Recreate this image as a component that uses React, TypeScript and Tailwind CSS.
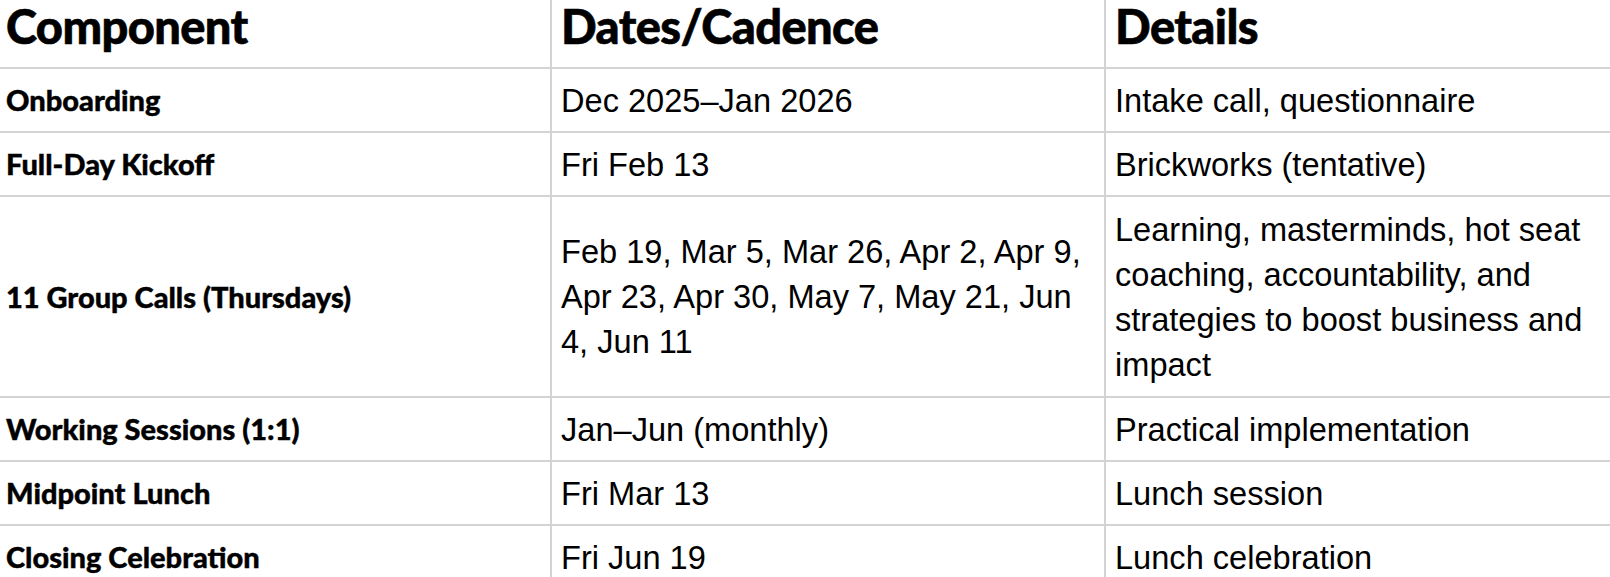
const rows: { name: string; dates: string; details: string; tall?: boolean }[] = [
  { name: 'Onboarding', dates: 'Dec 2025–Jan 2026', details: 'Intake call, questionnaire' },
  { name: 'Full-Day Kickoff', dates: 'Fri Feb 13', details: 'Brickworks (tentative)' },
  {
    name: '11 Group Calls (Thursdays)',
    dates: 'Feb 19, Mar 5, Mar 26, Apr 2, Apr 9, Apr 23, Apr 30, May 7, May 21, Jun 4, Jun 11',
    details: 'Learning, masterminds, hot seat coaching, accountability, and strategies to boost business and impact',
    tall: true,
  },
  { name: 'Working Sessions (1:1)', dates: 'Jan–Jun (monthly)', details: 'Practical implementation' },
  { name: 'Midpoint Lunch', dates: 'Fri Mar 13', details: 'Lunch session' },
  { name: 'Closing Celebration', dates: 'Fri Jun 19', details: 'Lunch celebration' },
];

// headings are a heavy geometric sans in the original; Lato bold plus a thin stroke is the nearest
const heading = "font-['Lato',sans-serif] font-black text-[47px] leading-[50px] tracking-[-0.6px] [-webkit-text-stroke:0.6px_#000]";
const label = "font-['Lato',sans-serif] font-black text-[29px] [-webkit-text-stroke:0.4px_#000]";
const body = "font-['Liberation_Sans',Arial,sans-serif] text-[32.6px] leading-[45px]";

export default function App() {
  return (
    <div className="min-h-screen w-full overflow-hidden bg-white text-black">
      <div className="-ml-[3px] w-[1663px]">
        <div className="grid h-[69px] grid-cols-[555px_554px_554px]">
          {['Component', 'Dates/Cadence', 'Details'].map((h) => (
            <div key={h} className="flex items-start border-r-2 border-b-2 border-[#d3d3d3] pl-[9px] pt-[1px]">
              <span className={heading}>{h}</span>
            </div>
          ))}
        </div>

        {rows.map((r) => (
          <div key={r.name} className={`grid grid-cols-[555px_554px_554px] ${r.tall ? 'h-[201px]' : 'h-[64px]'}`}>
            <div className="flex items-center border-r-2 border-b-2 border-[#d3d3d3] pl-[9px] pr-[10px]">
              <span className={label}>{r.name}</span>
            </div>
            <div className="flex items-center border-r-2 border-b-2 border-[#d3d3d3] pl-[9px] pr-[8px]">
              <span className={body}>{r.dates}</span>
            </div>
            <div className="flex items-center border-r-2 border-b-2 border-[#d3d3d3] pl-[9px] pr-[10px]">
              <span className={body}>{r.details}</span>
            </div>
          </div>
        ))}
      </div>
    </div>
  );
}
